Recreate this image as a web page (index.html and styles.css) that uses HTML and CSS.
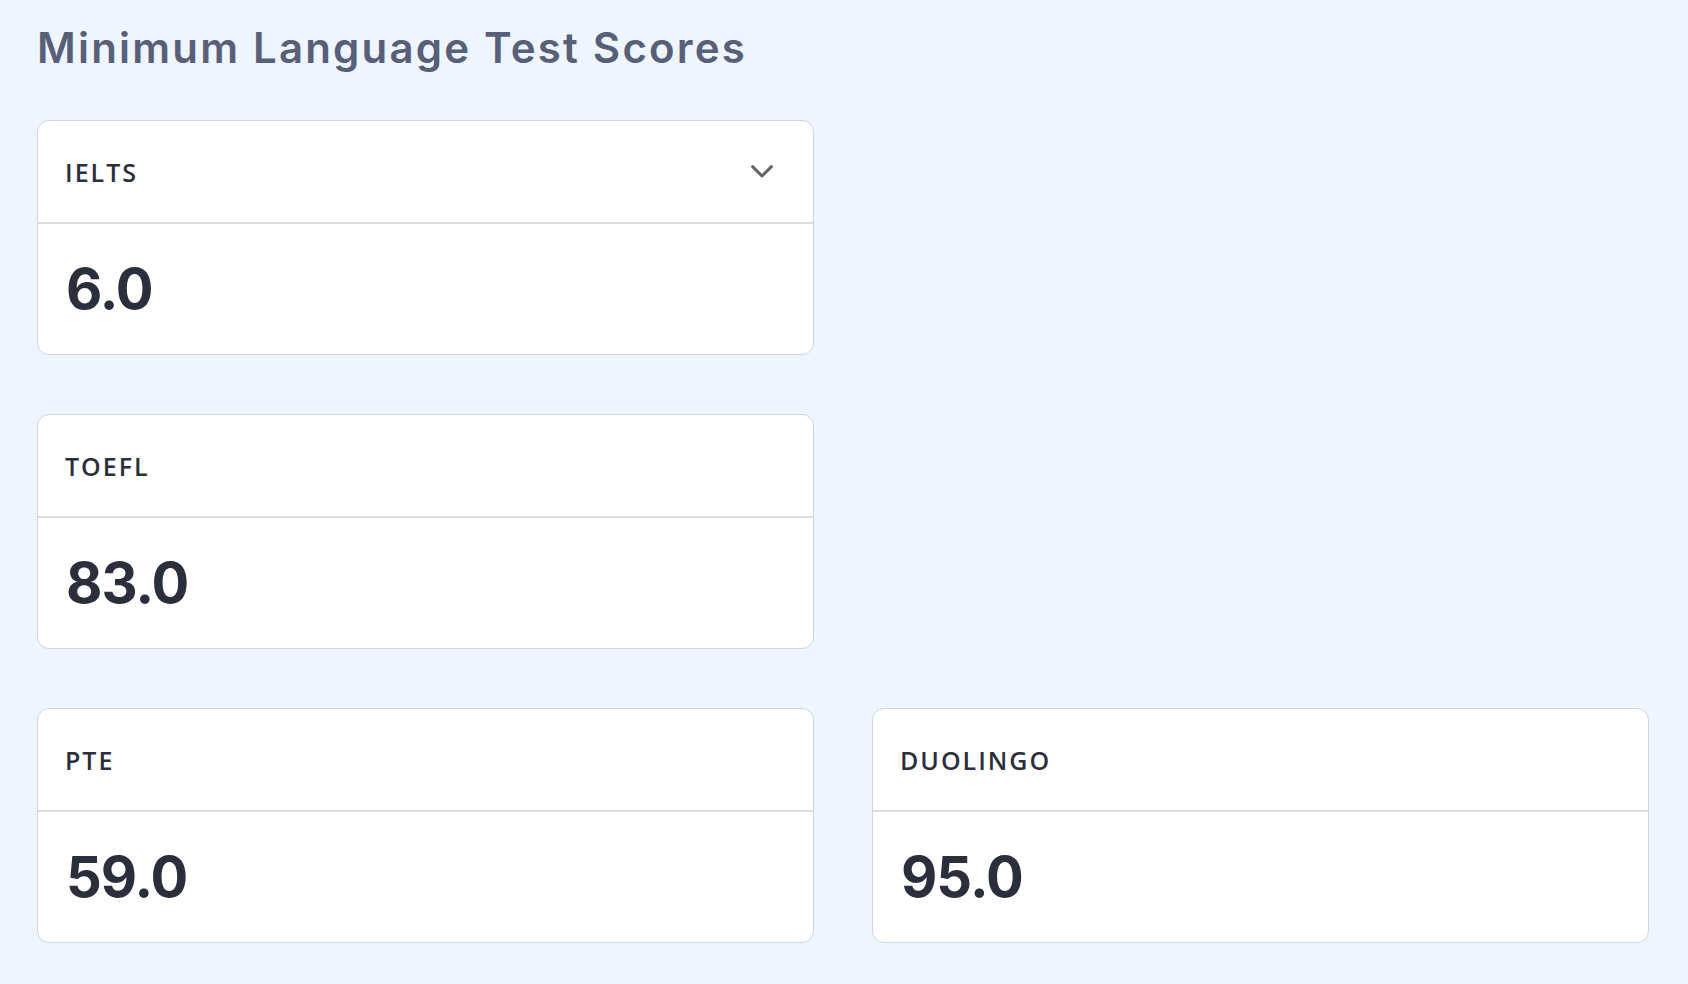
FILE: index.html
```html
<!DOCTYPE html>
<html lang="en">
<head>
<meta charset="utf-8">
<title>Minimum Language Test Scores</title>
<link rel="stylesheet" href="styles.css">
</head>
<body>
<main class="page">
  <h1 class="title">Minimum Language Test Scores</h1>
  <section class="grid">
    <article class="card card-ielts">
      <header class="card-head">
        <span class="label">IELTS</span>
        <svg class="chevron" width="22" height="13" viewBox="0 0 22 13" aria-hidden="true">
          <polyline points="1.6,1.6 11,11 20.4,1.6" fill="none" stroke="#636363" stroke-width="3" stroke-linecap="round" stroke-linejoin="round"/>
        </svg>
      </header>
      <div class="card-body"><span class="score">6.0</span></div>
    </article>
    <article class="card card-toefl">
      <header class="card-head"><span class="label">TOEFL</span></header>
      <div class="card-body"><span class="score">83.0</span></div>
    </article>
    <article class="card card-pte">
      <header class="card-head"><span class="label">PTE</span></header>
      <div class="card-body"><span class="score">59.0</span></div>
    </article>
    <article class="card card-duo">
      <header class="card-head"><span class="label">DUOLINGO</span></header>
      <div class="card-body"><span class="score">95.0</span></div>
    </article>
  </section>
</main>
</body>
</html>
```
FILE: styles.css
```css
html, body {
  margin: 0;
  padding: 0;
  background: #eef5fe;
}
body {
  font-family: "Inter", "Liberation Sans", sans-serif;
  color: #2c303c;
}
.page {
  padding: 23px 39px 40px 37px;
  display: flex;
  flex-direction: column;
  gap: 47px;
}
.title {
  margin: 0;
  font-family: "Inter", "Liberation Sans", sans-serif;
  font-weight: 600;
  font-size: 42px;
  line-height: 50px;
  letter-spacing: 2.2px;
  color: #585f78;
}
.grid {
  display: grid;
  grid-template-columns: 1fr 1fr;
  column-gap: 58px;
  row-gap: 59px;
}
.card-ielts { grid-column: 1; grid-row: 1; }
.card-toefl { grid-column: 1; grid-row: 2; }
.card-pte { grid-column: 1; grid-row: 3; }
.card-duo { grid-column: 2; grid-row: 3; }
.card {
  background: #ffffff;
  border: 1px solid #cdd4e2;
  border-radius: 12px;
  overflow: hidden;
}
.card-head {
  height: 101px;
  display: flex;
  align-items: center;
  justify-content: space-between;
  padding: 0 40px 0 27px;
  border-bottom: 2px solid #dedede;
}
.label {
  font-family: "Open Sans", "Liberation Sans", sans-serif;
  font-weight: 600;
  font-size: 25px;
  letter-spacing: 2px;
  color: #2b2f3b;
}
.chevron {
  display: block;
}
.card-body {
  height: 130px;
  display: flex;
  align-items: center;
  padding: 0 28px;
}
.score {
  font-family: "Inter", "Liberation Sans", sans-serif;
  font-weight: 700;
  font-size: 56px;
  letter-spacing: -1px;
  color: #2b2f3b;
}
```
